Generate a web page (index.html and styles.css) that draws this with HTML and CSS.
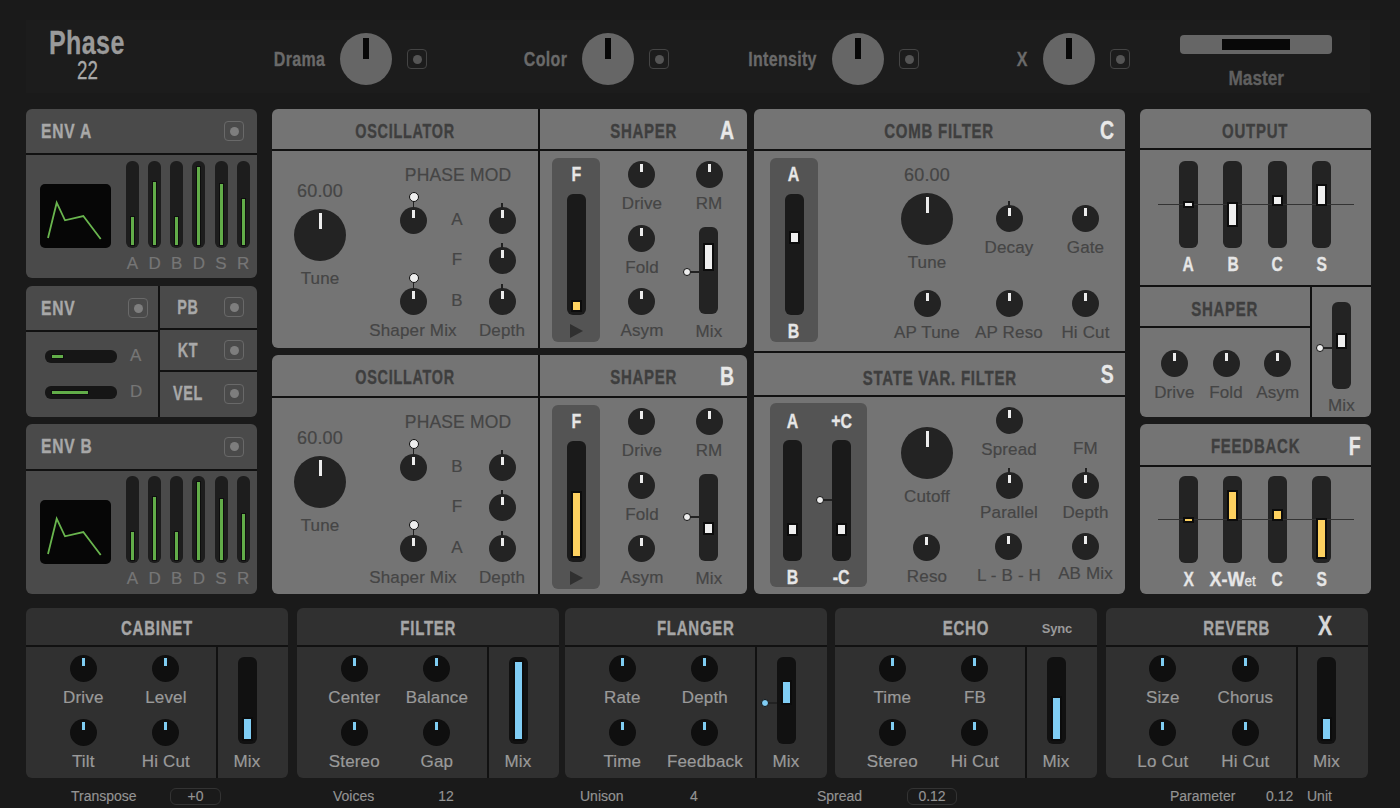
FILE: index.html
```html
<!DOCTYPE html>
<html lang="en">
<head>
<meta charset="utf-8">
<title>Phase 22</title>
<link rel="stylesheet" href="styles.css">
</head>
<body>
<div class="app">
  <header class="top">
    <div class="logo"><div class="logo-a"><span>Phase</span></div><div class="logo-b"><span>22</span></div></div>
    <div class="macro m-drama"><span class="mname"><span>Drama</span></span><span class="bigknob"></span><span class="btn dim"></span></div>
    <div class="macro m-color"><span class="mname"><span>Color</span></span><span class="bigknob"></span><span class="btn dim"></span></div>
    <div class="macro m-int"><span class="mname"><span>Intensity</span></span><span class="bigknob"></span><span class="btn dim"></span></div>
    <div class="macro m-x"><span class="mname"><span>X</span></span><span class="bigknob"></span><span class="btn dim"></span></div>
    <div class="master"><div class="mbar"><span class="mfill"></span></div><div class="mlabel">Master</div></div>
  </header>

  <main class="main">
    <section class="col-left">
      <div class="panel dark envp">
        <div class="head left h44"><span class="ttl">ENV A</span><span class="btn"></span></div>
        <div class="envbody">
          <div class="screen"><svg width="71" height="64" viewBox="0 0 71 64"><polyline points="8,54 16.7,18.7 25,36.3 43.3,32 60.7,55" fill="none" stroke="#69b54e" stroke-width="1.8"/></svg></div>
          <div class="vsliders">
            <div class="vcol"><div class="vs"><i class="vfill" style="height:28px"></i></div><span class="lbl g">A</span></div>
            <div class="vcol"><div class="vs"><i class="vfill" style="height:63px"></i></div><span class="lbl g">D</span></div>
            <div class="vcol"><div class="vs"><i class="vfill" style="height:28px"></i></div><span class="lbl g">B</span></div>
            <div class="vcol"><div class="vs"><i class="vfill" style="height:78px"></i></div><span class="lbl g">D</span></div>
            <div class="vcol"><div class="vs"><i class="vfill" style="height:61px"></i></div><span class="lbl g">S</span></div>
            <div class="vcol"><div class="vs"><i class="vfill" style="height:46px"></i></div><span class="lbl g">R</span></div>
          </div>
        </div>
      </div>

      <div class="panel dark envmid">
        <div class="envmid-l">
          <div class="head left h44"><span class="ttl">ENV</span><span class="btn"></span></div>
          <div class="hrows">
            <div class="hrow"><div class="hs"><i class="hfill" style="width:11px"></i></div><span class="lbl g">A</span></div>
            <div class="hrow"><div class="hs"><i class="hfill" style="width:36px"></i></div><span class="lbl g">D</span></div>
          </div>
        </div>
        <div class="envmid-r">
          <div class="srow r1"><span class="ttl">PB</span><span class="btn"></span></div>
          <div class="srow r2"><span class="ttl">KT</span><span class="btn"></span></div>
          <div class="srow r3"><span class="ttl">VEL</span><span class="btn"></span></div>
        </div>
      </div>

      <div class="panel dark envp envb">
        <div class="head left h45"><span class="ttl">ENV B</span><span class="btn"></span></div>
        <div class="envbody">
          <div class="screen"><svg width="71" height="64" viewBox="0 0 71 64"><polyline points="8,54 16.7,18.7 25,36.3 43.3,32 60.7,55" fill="none" stroke="#69b54e" stroke-width="1.8"/></svg></div>
          <div class="vsliders">
            <div class="vcol"><div class="vs"><i class="vfill" style="height:28px"></i></div><span class="lbl g">A</span></div>
            <div class="vcol"><div class="vs"><i class="vfill" style="height:63px"></i></div><span class="lbl g">D</span></div>
            <div class="vcol"><div class="vs"><i class="vfill" style="height:28px"></i></div><span class="lbl g">B</span></div>
            <div class="vcol"><div class="vs"><i class="vfill" style="height:78px"></i></div><span class="lbl g">D</span></div>
            <div class="vcol"><div class="vs"><i class="vfill" style="height:61px"></i></div><span class="lbl g">S</span></div>
            <div class="vcol"><div class="vs"><i class="vfill" style="height:46px"></i></div><span class="lbl g">R</span></div>
          </div>
        </div>
      </div>
    </section>

    <section class="col-osc">
      <div class="panel mid voice">
        <div class="osc">
          <div class="head h40"><span class="ttl tosc">OSCILLATOR</span></div>
          <div class="oscbody">
            <div class="tune"><span class="lbl val">60.00</span><span class="knob lg"></span><span class="lbl">Tune</span></div>
            <div class="pm">
              <span class="lbl pmt">PHASE MOD</span>
              <div class="cell"><span class="knob up"><i class="stem"></i></span></div><span class="lbl ctr">A</span><div class="cell"><span class="knob tick"></span></div>
              <span></span><span class="lbl ctr">F</span><div class="cell"><span class="knob tick"></span></div>
              <div class="cell"><span class="knob up"><i class="stem"></i></span></div><span class="lbl ctr">B</span><div class="cell"><span class="knob tick"></span></div>
              <span class="lbl cen">Shaper Mix</span><span></span><span class="lbl cen">Depth</span>
            </div>
          </div>
        </div>
        <div class="shp">
          <div class="head h40"><span class="ttl">SHAPER</span><span class="corner">A</span></div>
          <div class="shpbody">
            <div class="box">
              <span class="boxl">F</span>
              <div class="fader tall"><i class="thumb y" style="top:106px;height:12px"></i></div>
              <span class="play"></span>
            </div>
            <div class="kcol c60">
              <div class="cell"><span class="knob"></span><span class="lbl">Drive</span></div>
              <div class="cell"><span class="knob"></span><span class="lbl">Fold</span></div>
              <div class="cell"><span class="knob"></span><span class="lbl">Asym</span></div>
            </div>
            <div class="kcol c60b">
              <div class="cell"><span class="knob"></span><span class="lbl">RM</span></div>
              <div class="mixcell"><div class="fader"><i class="thumb" style="top:16px;height:28px"></i><b class="dot" style="top:41px"></b></div><span class="lbl">Mix</span></div>
            </div>
          </div>
        </div>
      </div>

      <div class="panel mid voice">
        <div class="osc">
          <div class="head h41"><span class="ttl tosc">OSCILLATOR</span></div>
          <div class="oscbody">
            <div class="tune"><span class="lbl val">60.00</span><span class="knob lg"></span><span class="lbl">Tune</span></div>
            <div class="pm">
              <span class="lbl pmt">PHASE MOD</span>
              <div class="cell"><span class="knob up"><i class="stem"></i></span></div><span class="lbl ctr">B</span><div class="cell"><span class="knob tick"></span></div>
              <span></span><span class="lbl ctr">F</span><div class="cell"><span class="knob tick"></span></div>
              <div class="cell"><span class="knob up"><i class="stem"></i></span></div><span class="lbl ctr">A</span><div class="cell"><span class="knob tick"></span></div>
              <span class="lbl cen">Shaper Mix</span><span></span><span class="lbl cen">Depth</span>
            </div>
          </div>
        </div>
        <div class="shp">
          <div class="head h41"><span class="ttl">SHAPER</span><span class="corner">B</span></div>
          <div class="shpbody">
            <div class="box">
              <span class="boxl">F</span>
              <div class="fader tall"><i class="thumb y" style="top:50px;height:67px"></i></div>
              <span class="play"></span>
            </div>
            <div class="kcol c60">
              <div class="cell"><span class="knob"></span><span class="lbl">Drive</span></div>
              <div class="cell"><span class="knob"></span><span class="lbl">Fold</span></div>
              <div class="cell"><span class="knob"></span><span class="lbl">Asym</span></div>
            </div>
            <div class="kcol c60b">
              <div class="cell"><span class="knob"></span><span class="lbl">RM</span></div>
              <div class="mixcell"><div class="fader"><i class="thumb" style="top:48px;height:13px"></i><b class="dot" style="top:39px"></b></div><span class="lbl">Mix</span></div>
            </div>
          </div>
        </div>
      </div>
    </section>

    <section class="panel mid col-filt">
      <div class="comb">
        <div class="head h40"><span class="ttl">COMB FILTER</span><span class="corner">C</span></div>
        <div class="combbody">
          <div class="box">
            <span class="boxl">A</span>
            <div class="fader tall"><i class="thumb" style="top:37px;height:13px"></i></div>
            <span class="boxl bot">B</span>
          </div>
          <div class="fgrid">
            <div class="tune t2"><span class="lbl val">60.00</span><span class="knob lg"></span><span class="lbl">Tune</span></div>
            <div class="cell pt54"><span class="knob tick"></span><span class="lbl">Decay</span></div>
            <div class="cell pt54"><span class="knob"></span><span class="lbl">Gate</span></div>
            <div class="cell"><span class="knob"></span><span class="lbl">AP Tune</span></div>
            <div class="cell"><span class="knob"></span><span class="lbl">AP Reso</span></div>
            <div class="cell"><span class="knob"></span><span class="lbl">Hi Cut</span></div>
          </div>
        </div>
      </div>
      <div class="svf">
        <div class="head h42 hsvf"><span class="ttl">STATE VAR. FILTER</span><span class="corner">S</span></div>
        <div class="svfbody">
          <div class="box two">
            <div class="bcol">
              <span class="boxl">A</span>
              <div class="fader tall"><i class="thumb" style="top:83px;height:13px"></i></div>
              <span class="boxl bot">B</span>
            </div>
            <div class="bcol">
              <span class="boxl">+C</span>
              <div class="fader tall"><i class="thumb" style="top:83px;height:13px"></i><b class="dot" style="top:56px"></b></div>
              <span class="boxl bot">-C</span>
            </div>
          </div>
          <div class="scol w84 p30">
            <div class="cell g8"><span class="knob lg"></span><span class="lbl">Cutoff</span></div>
            <div class="cell mt27"><span class="knob"></span><span class="lbl">Reso</span></div>
          </div>
          <div class="scol w80 p10">
            <div class="cell"><span class="knob"></span><span class="lbl">Spread</span></div>
            <div class="cell mt12 g4"><span class="knob tick"></span><span class="lbl">Parallel</span></div>
            <div class="cell mt10"><span class="knob"></span><span class="lbl">L - B - H</span></div>
          </div>
          <div class="scol w73 p42">
            <span class="lbl">FM</span>
            <div class="cell mt13 g4"><span class="knob tick"></span><span class="lbl">Depth</span></div>
            <div class="cell mt10 g4"><span class="knob"></span><span class="lbl">AB Mix</span></div>
          </div>
        </div>
      </div>
    </section>

    <section class="col-right">
      <div class="panel mid outp">
        <div class="head h39 hout"><span class="ttl">OUTPUT</span></div>
        <div class="bipolar">
          <span class="zero"></span>
          <div class="bcol2"><div class="fader"><i class="thumb" style="top:40px;height:7px"></i></div><span class="wl">A</span></div>
          <div class="bcol2"><div class="fader"><i class="thumb" style="top:41px;height:25px"></i></div><span class="wl">B</span></div>
          <div class="bcol2"><div class="fader"><i class="thumb" style="top:34px;height:11px"></i></div><span class="wl">C</span></div>
          <div class="bcol2"><div class="fader"><i class="thumb" style="top:23px;height:22px"></i></div><span class="wl">S</span></div>
        </div>
        <div class="outlow">
          <div class="outlow-l">
            <div class="head h39 hout"><span class="ttl">SHAPER</span></div>
            <div class="trio">
              <div class="cell"><span class="knob"></span><span class="lbl">Drive</span></div>
              <div class="cell"><span class="knob"></span><span class="lbl">Fold</span></div>
              <div class="cell"><span class="knob"></span><span class="lbl">Asym</span></div>
            </div>
          </div>
          <div class="outlow-r">
            <div class="fader"><i class="thumb" style="top:31px;height:16px"></i><b class="dot" style="top:42px"></b></div>
            <span class="lbl">Mix</span>
          </div>
        </div>
      </div>
      <div class="panel mid fbk">
        <div class="head h41"><span class="ttl">FEEDBACK</span><span class="corner cf">F</span></div>
        <div class="bipolar b2">
          <span class="zero"></span>
          <div class="bcol2"><div class="fader"><i class="thumb y" style="top:41px;height:6px"></i></div><span class="wl">X</span></div>
          <div class="bcol2"><div class="fader"><i class="thumb y" style="top:14px;height:31px"></i></div><span class="wl wide">X-W<small>et</small></span></div>
          <div class="bcol2"><div class="fader"><i class="thumb y" style="top:33px;height:12px"></i></div><span class="wl">C</span></div>
          <div class="bcol2"><div class="fader"><i class="thumb y" style="top:42px;height:41px"></i></div><span class="wl">S</span></div>
        </div>
      </div>
    </section>
  </main>

  <section class="fx">
    <div class="panel low">
      <div class="head h38"><span class="ttl">CABINET</span></div>
      <div class="fxbody">
        <div class="fxgrid">
          <div class="cell"><span class="knob bl"></span><span class="lbl">Drive</span></div>
          <div class="cell"><span class="knob bl"></span><span class="lbl">Level</span></div>
          <div class="cell"><span class="knob bl"></span><span class="lbl">Tilt</span></div>
          <div class="cell"><span class="knob bl"></span><span class="lbl">Hi Cut</span></div>
        </div>
        <div class="fxmix"><div class="fader blk"><i class="thumb b" style="top:60px;height:24px"></i></div><span class="lbl">Mix</span></div>
      </div>
    </div>
    <div class="panel low">
      <div class="head h38"><span class="ttl">FILTER</span></div>
      <div class="fxbody">
        <div class="fxgrid">
          <div class="cell"><span class="knob bl"></span><span class="lbl">Center</span></div>
          <div class="cell"><span class="knob bl"></span><span class="lbl">Balance</span></div>
          <div class="cell"><span class="knob bl"></span><span class="lbl">Stereo</span></div>
          <div class="cell"><span class="knob bl"></span><span class="lbl">Gap</span></div>
        </div>
        <div class="fxmix"><div class="fader blk"><i class="thumb b" style="top:3px;height:81px"></i></div><span class="lbl">Mix</span></div>
      </div>
    </div>
    <div class="panel low">
      <div class="head h38"><span class="ttl">FLANGER</span></div>
      <div class="fxbody">
        <div class="fxgrid">
          <div class="cell"><span class="knob bl"></span><span class="lbl">Rate</span></div>
          <div class="cell"><span class="knob bl"></span><span class="lbl">Depth</span></div>
          <div class="cell"><span class="knob bl"></span><span class="lbl">Time</span></div>
          <div class="cell"><span class="knob bl"></span><span class="lbl">Feedback</span></div>
        </div>
        <div class="fxmix"><div class="fader blk"><i class="thumb b" style="top:23px;height:25px"></i><b class="dot bd" style="top:42px"></b></div><span class="lbl">Mix</span></div>
      </div>
    </div>
    <div class="panel low">
      <div class="head h38"><span class="ttl">ECHO</span><span class="sync">Sync</span></div>
      <div class="fxbody">
        <div class="fxgrid">
          <div class="cell"><span class="knob bl"></span><span class="lbl">Time</span></div>
          <div class="cell"><span class="knob bl"></span><span class="lbl">FB</span></div>
          <div class="cell"><span class="knob bl"></span><span class="lbl">Stereo</span></div>
          <div class="cell"><span class="knob bl"></span><span class="lbl">Hi Cut</span></div>
        </div>
        <div class="fxmix"><div class="fader blk"><i class="thumb b" style="top:39px;height:45px"></i></div><span class="lbl">Mix</span></div>
      </div>
    </div>
    <div class="panel low">
      <div class="head h38"><span class="ttl">REVERB</span><span class="corner cx">X</span></div>
      <div class="fxbody">
        <div class="fxgrid">
          <div class="cell"><span class="knob bl"></span><span class="lbl">Size</span></div>
          <div class="cell"><span class="knob bl"></span><span class="lbl">Chorus</span></div>
          <div class="cell"><span class="knob bl"></span><span class="lbl">Lo Cut</span></div>
          <div class="cell"><span class="knob bl"></span><span class="lbl">Hi Cut</span></div>
        </div>
        <div class="fxmix"><div class="fader blk"><i class="thumb b" style="top:60px;height:24px"></i></div><span class="lbl">Mix</span></div>
      </div>
    </div>
  </section>

  <footer class="foot">
    <span class="f1">Transpose</span><span class="fbox f2">+0</span>
    <span class="f3">Voices</span><span class="f4">12</span>
    <span class="f5">Unison</span><span class="f6">4</span>
    <span class="f7">Spread</span><span class="fbox f8">0.12</span>
    <span class="f9">Parameter</span><span class="f10">0.12</span><span class="f11">Unit</span>
  </footer>
</div>
</body>
</html>
```
FILE: styles.css
```css
* { box-sizing: border-box; }
html, body { margin: 0; height: 100%; background: #1a1a1a; overflow: hidden; }
body { font-family: "Liberation Sans", Arial, sans-serif; }
.app { width: 1400px; height: 808px; padding: 20px 0 0 26px; }

/* top bar */
.top { display: flex; width: 1344px; height: 73px; background: #1c1c1c; align-items: flex-start; }
.logo { flex: none; width: 122px; padding-top: 8px; text-align: center; font-weight: 700; }
.logo span { display: inline-block; -webkit-text-stroke: .3px currentColor; }
.logo-a { font-size: 33px; line-height: 30px; color: #9a9a9a; }
.logo-a span { transform: scaleX(.76); letter-spacing: .5px; }
.logo-b { font-size: 26px; line-height: 25px; color: #a8a8a8; }
.logo-b span { transform: scaleX(.72); font-weight: 400; }
.macro { display: flex; flex: none; align-items: center; gap: 15px; margin-top: 13px; }
.m-drama { margin-left: 124px; }
.m-color { margin-left: 96px; }
.m-int { margin-left: 77px; }
.m-x { margin-left: 98px; }
.mname { display: flex; justify-content: flex-end; white-space: nowrap; font-weight: 700; font-size: 20px; color: #6a6a6a; }
.mname span { display: block; flex: none; transform: scaleX(.8); letter-spacing: .4px; transform-origin: right center; -webkit-text-stroke: .3px currentColor; }
.m-drama .mname { width: 53px; }
.m-color .mname { width: 44px; }
.m-int .mname { width: 71px; }
.m-x .mname { width: 11px; }
.bigknob { position: relative; width: 52px; height: 52px; border-radius: 50%; background: #666; display: block; }
.bigknob::after { content: ""; position: absolute; left: 23px; top: 5px; width: 6px; height: 21px; background: #080808; }
.btn { position: relative; display: block; flex: none; width: 20px; height: 20px; border: 1.5px solid #696969; border-radius: 4px; }
.btn::after { content: ""; position: absolute; left: 4.5px; top: 4.5px; width: 9px; height: 9px; border-radius: 50%; background: #7e7e7e; }
.btn.dim { border-color: #444; }
.btn.dim::after { background: #555; }
.master { flex: none; margin-left: 50px; margin-top: 15px; width: 152px; display: flex; flex-direction: column; align-items: center; }
.mbar { width: 152px; height: 19px; border-radius: 4px; background: #666; display: flex; justify-content: center; align-items: center; }
.mfill { width: 68px; height: 11px; background: #080808; }
.mlabel { margin-top: 13px; line-height: 22px; font-weight: 700; font-size: 20px; color: #606060; transform: scaleX(.86); -webkit-text-stroke: .3px currentColor; }

/* main */
.main { display: flex; margin-top: 16px; height: 485px; }
.panel { border-radius: 6px; }
.dark { background: #4a4a4a; }
.mid { background: #747474; }
.low { background: #303030; }
.col-left { flex: none; width: 231px; display: flex; flex-direction: column; }
.col-osc { flex: none; width: 475px; margin-left: 15px; display: flex; flex-direction: column; gap: 7px; }
.col-filt { flex: none; width: 371px; margin-left: 7px; }
.col-right { flex: none; width: 231px; margin-left: 15px; display: flex; flex-direction: column; gap: 7px; }

.head { position: relative; display: flex; align-items: center; justify-content: center; border-bottom: 2px solid #111; padding-top: 4px; }
.head.left { justify-content: space-between; padding: 0 13px 0 15px; }
.hsvf { padding-top: 8px; }
.hout { padding-top: 6px; }
.h38 { height: 39px; }
.h39 { height: 41px; }
.h40 { height: 42px; }
.h41 { height: 43px; }
.h42 { height: 44px; }
.h44 { height: 46px; }
.h45 { height: 47px; }
.ttl { display: block; white-space: nowrap; font-weight: 700; font-size: 20px; letter-spacing: 1px; color: #3e3e3e; transform: scaleX(.75); -webkit-text-stroke: .35px currentColor; }
.tosc { transform: scaleX(.72); }
.head.left .ttl { transform: scaleX(.78); transform-origin: left center; }
.dark .ttl { color: #a8a8a8; }
.low .ttl { color: #a6a6a6; }
.corner { position: absolute; right: 11px; top: 6px; font-weight: 700; font-size: 25px; line-height: 30px; color: #e8e8e8; transform: scaleX(.78); -webkit-text-stroke: .3px currentColor; }
.col-filt .corner { right: 9px; }
.corner.cf { right: 9px; top: 7px; }
.corner.cx { right: 33px; top: 3px; color: #d8d8d8; font-size: 27px; }
.sync { position: absolute; right: 25px; top: 13px; font-size: 13px; font-weight: 700; color: #9a9a9a; letter-spacing: -.2px; }

.lbl { display: block; font-size: 17px; line-height: 20px; color: #454545; white-space: nowrap; letter-spacing: .15px; -webkit-text-stroke: .2px currentColor; }
.lbl.g { color: #767676; }
.low .lbl { color: #9a9a9a; }
.val { font-size: 18px; }

/* knobs */
.knob { position: relative; display: block; flex: none; width: 27px; height: 27px; border-radius: 50%; background: #232323; }
.knob::after { content: ""; position: absolute; left: 12px; top: 3px; width: 3px; height: 8px; background: #ececec; }
.knob.lg { width: 52px; height: 52px; }
.knob.lg::after { left: 24.5px; top: 4px; height: 16px; }
.knob.tick::before { content: ""; position: absolute; left: 12.5px; top: -4px; width: 2px; height: 5px; background: #222; }
.knob.up::before { content: ""; position: absolute; z-index: 1; left: 9.5px; top: -15px; width: 8px; height: 8px; border-radius: 50%; background: #eee; border: 1.5px solid #111; }
.stem { position: absolute; left: 13px; top: -8px; width: 1.5px; height: 9px; background: #222; }
.knob.bl { background: #0f0f0f; }
.knob.bl::after { background: #7fcdf2; height: 8px; }

.cell { display: flex; flex-direction: column; align-items: center; gap: 6px; }
.g8 { gap: 8px; }
.g4 { gap: 4px; }
.mt27 { margin-top: 27px; }
.mt13 { margin-top: 13px; }
.mt12 { margin-top: 12px; }
.mt10 { margin-top: 10px; }

/* faders */
.fader { position: relative; flex: none; width: 19px; height: 87px; border-radius: 6px; background: #232323; }
.fader.tall { height: 121px; background: #1a1a1a; }
.fader.blk { background: #111; }
.thumb { position: absolute; z-index: 2; left: 4px; width: 11px; background: #eee; border: 2px solid #0c0c0c; }
.thumb.y { background: #fdd160; }
.thumb.b { background: #80cdf4; }
.dot { position: absolute; z-index: 2; left: -16px; width: 8px; height: 8px; border-radius: 50%; background: #eee; border: 1.5px solid #111; }
.dot::after { content: ""; position: absolute; left: 100%; top: 2px; width: 9px; height: 1.5px; background: #222; }
.dot.bd { background: #80cdf4; }

/* env */
.envp { height: 169px; }
.envb { height: 170px; margin-top: 7px; }
.envbody { display: flex; padding: 6px 0 0 14px; }
.envb .envbody { padding-top: 5px; }
.screen { flex: none; width: 71px; height: 64px; margin-top: 23px; background: #060606; border-radius: 5px; }
.screen svg { display: block; }
.envb .screen { margin-top: 24px; }
.vsliders { display: flex; gap: 9.15px; margin-left: 15px; }
.vcol { display: flex; flex-direction: column; align-items: center; width: 13px; gap: 6px; }
.vs { position: relative; flex: none; width: 13px; height: 87px; background: #1d1d1d; border-radius: 6px; }
.vfill { position: absolute; left: 5px; bottom: 3px; width: 3px; background: #62ad49; box-shadow: 0 0 0 1px #0e0e0e; }
.envmid { height: 131px; margin-top: 8px; display: flex; }
.envmid-l { width: 134px; border-right: 2px solid #111; }
.envmid-l .head.left { padding-right: 10px; }
.envmid-r { flex: 1; }
.hrows { display: flex; flex-direction: column; gap: 22px; padding: 17px 0 0 19px; }
.hrow { display: flex; align-items: center; gap: 13px; height: 14px; }
.hs { position: relative; flex: none; width: 72px; height: 13px; border-radius: 6px; background: #161616; }
.hfill { position: absolute; left: 7px; top: 5px; height: 3px; background: #62ad49; box-shadow: 0 0 0 1px #0e0e0e; }
.srow { display: flex; align-items: center; position: relative; padding-right: 13px; justify-content: flex-end; }
.srow .ttl { position: absolute; left: 0; width: 56px; text-align: center; transform: scaleX(.72); }
.r1 { height: 44px; border-bottom: 2px solid #111; }
.r2 { height: 42px; border-bottom: 2px solid #111; }
.r3 { height: 43px; }

/* oscillator */
.voice { display: flex; height: 239px; }
.osc { flex: none; width: 268px; border-right: 2px solid #111; }
.shp { flex: 1; }
.oscbody { display: flex; height: 197px; }
.tune { display: flex; flex: none; flex-direction: column; align-items: center; width: 96px; padding-top: 30px; }
.tune .knob { margin: 8px 0; }
.pm { display: grid; flex: none; grid-template-columns: 76px 12px 78px; grid-template-rows: 42px 40px 41px 33px 20px; padding: 14px 0 0 7px; }
.pmt { grid-column: 1 / 4; text-align: center; font-size: 17.5px; }
.ctr { text-align: center; margin-top: 3px; }
.cen { display: flex; justify-content: center; }
.pm .cen:last-child { grid-column: 3; }
.pm .cen:nth-last-child(3) { grid-column: 1; }

/* shaper */
.shpbody { display: flex; padding: 7px 0 0 12px; }
.box { flex: none; width: 48px; height: 184px; background: #545454; border-radius: 6px; display: flex; flex-direction: column; align-items: center; padding-top: 6px; }
.boxl { display: block; height: 20px; line-height: 20px; margin-bottom: 10px; font-weight: 700; font-size: 21px; color: #e6e6e6; transform: scaleX(.76); -webkit-text-stroke: .3px currentColor; }
.boxl.bot { margin: 6px 0 0; }
.play { width: 0; height: 0; margin-top: 9px; border-left: 13px solid #303030; border-top: 7px solid transparent; border-bottom: 7px solid transparent; }
.kcol { flex: none; width: 60px; display: flex; flex-direction: column; align-items: center; padding-top: 3px; }
.c60 { margin-left: 12px; gap: 10.5px; }
.c60b { margin-left: 7px; }
.mixcell { display: flex; flex-direction: column; align-items: center; gap: 8px; margin-top: 13px; }

/* comb */
.comb { height: 244px; border-bottom: 2px solid #111; }
.combbody { display: flex; padding: 7px 0 0 16px; height: 200px; }
.fgrid { display: grid; grid-template-columns: 84px 80px 73px; grid-template-rows: 138.5px auto; margin-left: 67px; margin-top: -7px; }
.t2 { width: auto; padding-top: 14px; }
.pt54 { padding-top: 54px; }

/* svf */
.svfbody { display: flex; padding: 6px 0 0 16px; }
.box.two { width: 97px; flex-direction: row; gap: 30px; padding: 8px 0 0 13px; }
.bcol { display: flex; flex-direction: column; align-items: center; width: 19px; }
.bcol .boxl { margin-bottom: 9px; white-space: nowrap; }
.bcol .boxl.bot { margin: 6px 0 0; }
.scol { display: flex; flex: none; flex-direction: column; align-items: center; margin-top: -6px; }
.w84 { width: 84px; margin-left: 18px; }
.w80 { width: 80px; }
.w73 { width: 73px; }
.p30 { padding-top: 30px; }
.p10 { padding-top: 10px; }
.p42 { padding-top: 42px; }

/* right */
.outp { height: 308px; }
.bipolar { position: relative; display: flex; gap: 25.3px; padding: 10.5px 0 0 39px; height: 135px; }
.b2 { padding-top: 9px; height: 127px; }
.zero { position: absolute; left: 17.5px; top: 54px; width: 196px; height: 1px; background: #333; z-index: 1; }
.b2 .zero { top: 52px; }
.bcol2 { display: flex; flex-direction: column; align-items: center; width: 19px; gap: 6px; }
.wl { flex: none; font-weight: 700; font-size: 20px; line-height: 20px; color: #e6e6e6; white-space: nowrap; transform: scaleX(.78); -webkit-text-stroke: .3px currentColor; }
.wl.wide { transform: scaleX(.9); }
.wl small { font-size: 15px; font-weight: 400; }
.outlow { display: flex; border-top: 2px solid #111; height: 132px; }
.outlow-l { flex: none; width: 172px; border-right: 2px solid #111; }
.outlow-r { flex: 1; display: flex; flex-direction: column; align-items: center; padding: 15px 0 0 0; gap: 7px; }
.trio { display: grid; grid-template-columns: repeat(3, 51.7px); justify-items: center; padding: 22px 0 0 8.5px; }
.fbk { height: 170px; }

/* fx row */
.fx { display: flex; margin-top: 14px; }
.fx .panel { width: 262px; height: 170px; flex: none; }
.fx .panel:nth-child(2) { margin-left: 9px; }
.fx .panel:nth-child(3) { margin-left: 6px; }
.fx .panel:nth-child(4) { margin-left: 8px; }
.fx .panel:nth-child(5) { margin-left: 8.5px; }
.fxbody { display: flex; height: 131px; }
.fxgrid { flex: none; width: 192px; border-right: 2px solid #111; display: grid; grid-template-columns: 82.6px 82.6px; grid-auto-rows: 63.7px; justify-items: center; padding: 8px 0 0 16px; }
.fxmix { display: flex; flex-direction: column; align-items: center; gap: 8px; flex: none; width: 19px; margin-left: 19.5px; padding-top: 10px; }

/* footer */
.foot { display: flex; align-items: center; height: 18px; margin-top: 9px; font-size: 14px; color: #949494; white-space: nowrap; -webkit-text-stroke: .15px currentColor; }
.fbox { display: flex; align-items: center; justify-content: center; height: 17px; border: 1.5px solid #333; border-radius: 6px; flex: none; }
.f1 { flex: none; margin-left: 45px; width: 99px; }
.f2 { width: 51px; }
.f3 { flex: none; margin-left: 112px; width: 101px; }
.f4 { flex: none; width: 24px; text-align: center; }
.f5 { flex: none; margin-left: 122px; width: 98px; }
.f6 { flex: none; width: 32px; text-align: center; }
.f7 { flex: none; margin-left: 107px; width: 90px; }
.f8 { width: 50px; }
.f9 { flex: none; margin-left: 213px; width: 96px; }
.f10 { flex: none; width: 41px; }
```
